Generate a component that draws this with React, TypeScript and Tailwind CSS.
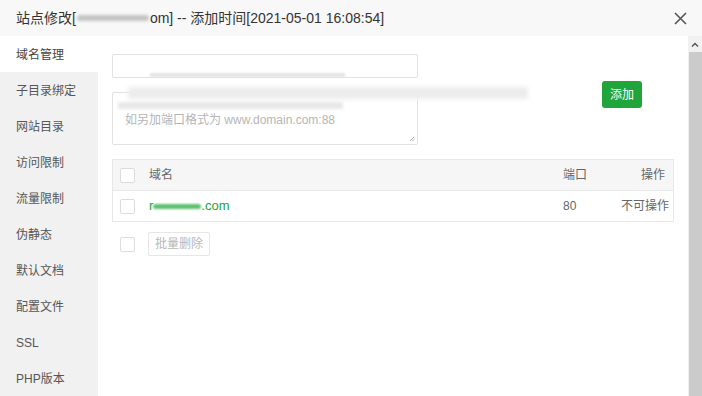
const menu = ["域名管理", "子目录绑定", "网站目录", "访问限制", "流量限制", "伪静态", "默认文档", "配置文件", "SSL", "PHP版本"];

function Checkbox() {
  return <span className="block w-[15px] h-[15px] border border-[#dcdcdc] rounded-[2px] bg-white"></span>;
}

export default function App() {
  return (
    <div
      className="w-[702px] h-[396px] overflow-hidden bg-white text-[#555]"
      style={{ fontFamily: '"Liberation Sans", "Noto Sans CJK SC", sans-serif' }}
    >
      {/* Title bar */}
      <div className="h-[36px] bg-[#f8f8f8] flex items-center justify-between pl-[16px] pr-[14px]">
        <div className="text-[14px] text-[#333] flex items-center whitespace-nowrap">
          <span>站点修改[</span>
          <span className="inline-block w-[72px] h-[6px] rounded-full bg-[#c4c4c4] blur-[1.5px] mx-[1px]"></span>
          <span>om] -- 添加时间[2021-05-01 16:08:54]</span>
        </div>
        <svg width="13" height="13" viewBox="0 0 13 13" className="mr-[1px]">
          <path d="M1 1L12 12M12 1L1 12" stroke="#555" strokeWidth="1.6" />
        </svg>
      </div>

      <div className="flex h-[360px]">
        {/* Sidebar */}
        <div className="w-[98px] bg-[#f1f1f1] flex flex-col text-[12px]">
          {menu.map((m, i) => (
            <div
              key={m}
              className={
                i === 0
                  ? "h-[36px] shrink-0 flex items-center pl-[16px] pt-[1px] bg-white text-[#444]"
                  : "h-[36px] shrink-0 flex items-center pl-[16px] pt-[1px] text-[#555]"
              }
            >
              {m}
            </div>
          ))}
        </div>

        {/* Content */}
        <div className="flex-1 px-[14px] pt-[18px] relative">
          <div className="flex">
            <div className="w-[306px] flex flex-col gap-[14px]">
              <div className="h-[24px] border border-[#e2e2e2] rounded-[2px]"></div>
              <div className="h-[53px] border border-[#e2e2e2] rounded-[2px] relative pl-[12px] pt-[18px] text-[12px] text-[#b5b5b5] whitespace-nowrap overflow-hidden">
                如另加端口格式为 www.domain.com:88
                <svg width="6" height="6" viewBox="0 0 6 6" className="absolute right-[2px] bottom-[2px]">
                  <path d="M5 1L1 5M5 3.5L3.5 5" stroke="#999" strokeWidth="0.8" />
                </svg>
              </div>
            </div>
            <button className="ml-auto mr-[32px] mt-[27px] self-start w-[40px] h-[27px] rounded-[3px] bg-[#20a53a] text-white text-[12px]">
              添加
            </button>
          </div>

          {/* redaction blurs */}
          <div className="absolute left-[52px] top-[37px] w-[195px] h-[4px] bg-[#e3e3e3] blur-[1px]"></div>
          <div className="absolute left-[30px] top-[51px] w-[400px] h-[12px] bg-[#ececec] blur-[2px]"></div>
          <div className="absolute left-[20px] top-[66px] w-[225px] h-[7px] bg-[#e8e8e8] blur-[1.5px]"></div>

          {/* Table */}
          <div className="mt-[14px] border border-[#e8e8e8] text-[12px]">
            <div className="h-[31px] bg-[#f6f6f6] flex items-center pl-[7px] pr-[8px] border-b border-[#e8e8e8] text-[#666]">
              <Checkbox />
              <span className="ml-[14px]">域名</span>
              <span className="ml-auto w-[58px]">端口</span>
              <span className="w-[44px] text-right">操作</span>
            </div>
            <div className="h-[30px] flex items-center pl-[7px] pr-[8px]">
              <Checkbox />
              <span className="ml-[14px] flex items-center text-[#20a53a] text-[13px]">
                <span>r</span>
                <span className="inline-block w-[48px] h-[5px] rounded-full bg-[#5cc06f] blur-[1px]"></span>
                <span>.com</span>
              </span>
              <span className="ml-auto w-[58px] text-[#666]">80</span>
              <span className="w-[44px] text-right text-[#666] whitespace-nowrap">不可操作</span>
            </div>
          </div>

          <div className="mt-[10px] flex items-center pl-[8px] gap-[13px]">
            <Checkbox />
            <button className="h-[24px] px-[6px] border border-[#e6e6e6] rounded-[2px] text-[12px] text-[#b8b8b8] bg-white">
              批量删除
            </button>
          </div>
        </div>

        {/* Scrollbar */}
        <div className="w-[14px] bg-[#f1f1f1] flex flex-col">
          <div className="h-[16px] flex items-center justify-center">
            <svg width="8" height="5" viewBox="0 0 8 5">
              <path d="M1 4.5L4 1.5L7 4.5" stroke="#505050" strokeWidth="1.4" fill="none" />
            </svg>
          </div>
          <div className="flex-1 ml-[1px] bg-[#cbcbcb]"></div>
        </div>
      </div>
    </div>
  );
}
